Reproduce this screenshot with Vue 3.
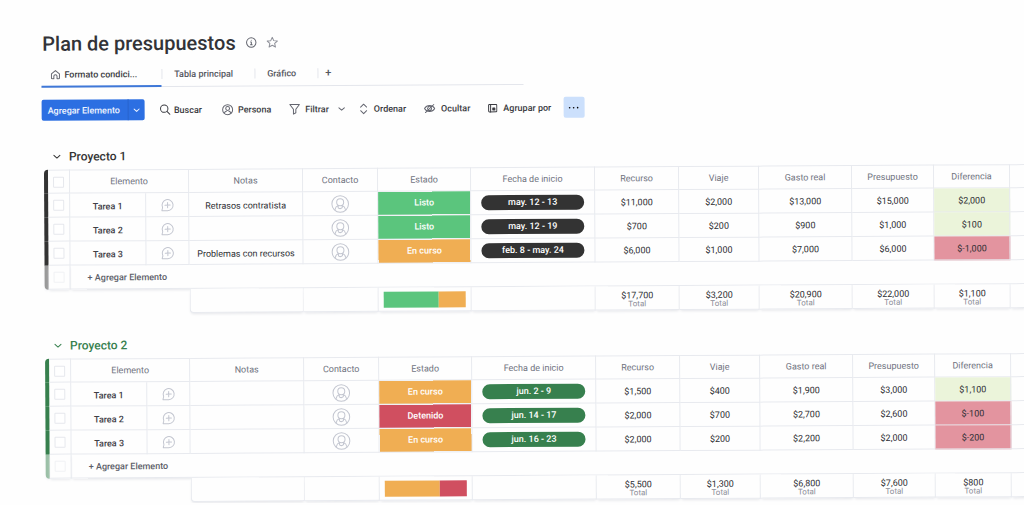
<script setup>
import { ref } from 'vue'

const columns = ['Notas', 'Contacto', 'Estado', 'Fecha de inicio', 'Recurso', 'Viaje', 'Gasto real', 'Presupuesto', 'Diferencia']

const projects = ref([
  {
    id: 'p1',
    name: 'Proyecto 1',
    theme: 'dark',
    tasks: [
      { name: 'Tarea 1', note: 'Retrasos contratista', status: 'Listo', tone: 'done', dates: 'may. 12 - 13', values: ['$11,000', '$2,000', '$13,000', '$15,000'], diff: '$2,000' },
      { name: 'Tarea 2', note: '', status: 'Listo', tone: 'done', dates: 'may. 12 - 19', values: ['$700', '$200', '$900', '$1,000'], diff: '$100' },
      { name: 'Tarea 3', note: 'Problemas con recursos', status: 'En curso', tone: 'working', dates: 'feb. 8 - may. 24', values: ['$6,000', '$1,000', '$7,000', '$6,000'], diff: '$-1,000' }
    ],
    summary: [{ tone: 'done', share: 2 }, { tone: 'working', share: 1 }],
    totals: ['$17,700', '$3,200', '$20,900', '$22,000', '$1,100']
  },
  {
    id: 'p2',
    name: 'Proyecto 2',
    theme: 'green',
    tasks: [
      { name: 'Tarea 1', note: '', status: 'En curso', tone: 'working', dates: 'jun. 2 - 9', values: ['$1,500', '$400', '$1,900', '$3,000'], diff: '$1,100' },
      { name: 'Tarea 2', note: '', status: 'Detenido', tone: 'stuck', dates: 'jun. 14 - 17', values: ['$2,000', '$700', '$2,700', '$2,600'], diff: '$-100' },
      { name: 'Tarea 3', note: '', status: 'En curso', tone: 'working', dates: 'jun. 16 - 23', values: ['$2,000', '$200', '$2,200', '$2,000'], diff: '$-200' }
    ],
    summary: [{ tone: 'working', share: 2 }, { tone: 'stuck', share: 1 }],
    totals: ['$5,500', '$1,300', '$6,800', '$7,600', '$800']
  }
])
</script>

<template>
  <div class="page">
    <main class="board">
      <header class="title-row">
        <h1>Plan de presupuestos</h1>
        <button aria-label="Información">
          <svg width="12" height="12" viewBox="0 0 12 12" class="ink muted">
            <circle cx="6" cy="6" r="4.7" />
            <path d="M5.3 5.5H6.1V8.2M5.2 8.3h1.8M6 3.6v.1" />
          </svg>
        </button>
        <button class="star" aria-label="Favorito">
          <svg width="12" height="12" viewBox="0 0 12 12" class="ink soft">
            <path d="M6 .9 7.5 4.2l3.6.4-2.7 2.4.8 3.6L6 8.8l-3.2 1.8.8-3.6L.9 4.6l3.6-.4Z" />
          </svg>
        </button>
      </header>

      <nav class="tabs">
        <button class="tab active">
          <svg width="10" height="10" viewBox="0 0 10 10" class="ink muted">
            <path d="M1 4.2 5 .9l4 3.3v4.1q0 .8-.8.8H6.6V6.6a1.6 1.6 0 0 0-3.2 0v2.5H1.8Q1 9.1 1 8.3Z" />
          </svg>
          Formato condici...
        </button>
        <button class="tab">Tabla principal</button>
        <button class="tab">Gráfico</button>
        <button class="tab add" aria-label="Agregar vista">+</button>
      </nav>

      <div class="toolbar">
        <div class="split">
          <button class="split-main">Agregar Elemento</button>
          <button class="split-more" aria-label="Más opciones">
            <svg width="8" height="8" viewBox="0 0 8 8" class="ink"><path d="m1.5 2.8 2.5 2.4 2.5-2.4" /></svg>
          </button>
        </div>
        <button class="tool search">
          <svg width="11" height="11" viewBox="0 0 11 11" class="ink"><circle cx="4.6" cy="4.6" r="3.7" /><path d="m7.3 7.3 3 3" /></svg>
          Buscar
        </button>
        <button class="tool person">
          <svg width="12" height="12" viewBox="0 0 12 12" class="ink muted">
            <circle cx="6" cy="6" r="5" /><circle cx="6" cy="4.8" r="1.9" />
            <path d="M2.7 9.500c.3-1 1-1.700 2-2M9.300 9.500c-.3-1-1-1.700-2-2" />
          </svg>
          Persona
        </button>
        <button class="tool filter">
          <svg width="12" height="12" viewBox="0 0 12 12" class="ink muted"><path d="M1.200 1.200h9.600L7.200 6v3.400L4.800 10.800V6Z" /></svg>
          Filtrar
          <svg width="8" height="8" viewBox="0 0 8 8" class="ink muted caret"><path d="m1.300 2.800 2.700 2.400 2.700-2.400" /></svg>
        </button>
        <button class="tool sort">
          <svg width="8" height="12" viewBox="0 0 8 12" class="ink muted"><path d="M1 4.200 4 1.300l3 2.900M1 7.800l3 2.900 3-2.900" /></svg>
          Ordenar
        </button>
        <button class="tool hide">
          <svg width="12" height="10" viewBox="0 0 12 10" class="ink muted">
            <path d="M.9 5c2.400-4 7.800-4 10.200 0-2.400 4-7.800 4-10.200 0ZM1.800 9 10.200 1M4.500 6.400a2 2 0 0 1 2.600-3M7.800 4.300a2 2 0 0 1-2.600 2.500" />
          </svg>
          Ocultar
        </button>
        <button class="tool group-by">
          <svg width="10" height="10" viewBox="0 0 10 10" class="ink">
            <rect x="1" y="1.300" width="8.200" height="7.400" rx=".8" /><path d="M3 1.300v7.400" /><path class="solid" d="M5.200 4.800h2v2h-2Z" />
          </svg>
          Agrupar por
        </button>
        <button class="dots" aria-label="Más">
          <svg width="12" height="4" viewBox="0 0 12 4"><circle cx="2" cy="2" r=".8" /><circle cx="6" cy="2" r=".8" /><circle cx="10" cy="2" r=".8" /></svg>
        </button>
      </div>

      <section v-for="project in projects" :key="project.id" class="project" :class="project.theme">
        <h2>
          <svg width="10" height="10" viewBox="0 0 10 10" class="ink"><path d="m2 3.700 3 2.700 3-2.700" /></svg>
          {{ project.name }}
        </h2>
        <table>
          <colgroup>
            <col class="w-bar"><col class="w-check"><col class="w-name"><col class="w-chat">
            <col class="w-notes"><col class="w-contact"><col class="w-status"><col class="w-date">
            <col class="w-resource"><col class="w-travel"><col class="w-cost"><col class="w-budget"><col class="w-diff"><col>
          </colgroup>
          <thead>
            <tr>
              <td class="bar bar-top"></td>
              <td><input type="checkbox" aria-label="Seleccionar todo"></td>
              <th colspan="2">Elemento</th>
              <th v-for="column in columns" :key="column">{{ column }}</th>
              <td></td>
            </tr>
          </thead>
          <tbody>
            <tr v-for="task in project.tasks" :key="task.name">
              <td class="bar"></td>
              <td><input type="checkbox" :aria-label="task.name"></td>
              <td class="name">{{ task.name }}</td>
              <td>
                <button class="cell-button" aria-label="Comentar">
                  <svg width="14" height="14" viewBox="0 0 14 14" class="ink faint">
                    <path d="M1.700 12.600h5.700a5.500 5.500 0 1 0-5.100-3.400q.3.900-.3 1.800ZM7.400 4.500v5.200M4.800 7.100H10" />
                  </svg>
                </button>
              </td>
              <td class="note">{{ task.note }}</td>
              <td>
                <svg width="20" height="20" viewBox="0 0 20 20" class="ink faint avatar">
                  <circle cx="10" cy="10" r="8.300" /><circle cx="10" cy="8.300" r="3.500" />
                  <path d="M4.800 15.500c.3-2 1.300-3.300 3.200-4v2.200q2 1.800 4 0v-2.200c1.900.7 2.900 2 3.200 4" />
                </svg>
              </td>
              <td class="status" :class="task.tone">{{ task.status }}</td>
              <td><span class="pill">{{ task.dates }}</span></td>
              <td v-for="(value, i) in task.values" :key="i" class="value">{{ value }}</td>
              <td class="value" :class="task.diff.includes('-') ? 'negative' : 'positive'">{{ task.diff }}</td>
              <td></td>
            </tr>
            <tr class="add-row">
              <td class="bar bar-bottom"></td>
              <td><input type="checkbox" disabled aria-label="Nuevo elemento"></td>
              <td colspan="12" class="add-cell"><button class="add-item">+ Agregar Elemento</button></td>
            </tr>
          </tbody>
          <tfoot>
            <tr>
              <td colspan="4" class="blank"></td>
              <td class="first"></td>
              <td></td>
              <td>
                <div class="battery">
                  <span v-for="part in project.summary" :key="part.tone" :class="part.tone" :style="{ flexGrow: part.share }"></span>
                </div>
              </td>
              <td></td>
              <td v-for="(total, i) in project.totals" :key="i" class="total">{{ total }}<small>Total</small></td>
              <td></td>
            </tr>
          </tfoot>
        </table>
      </section>
    </main>
  </div>
</template>

<style>
body {
  background: #fefefe;
}
</style>

<style scoped>
.page {
  overflow: hidden;
  background: #fefefe;
}
.board {
  box-sizing: border-box;
  padding: 32px 0 0 41px;
  color: #3a3b41;
  font-family: Roboto, "Liberation Sans", sans-serif;
  font-size: 9px;
  transform: rotate(-0.33deg);
  transform-origin: 0 0;
}
button {
  padding: 0;
  border: 0;
  background: none;
  color: inherit;
  font: inherit;
  white-space: nowrap;
}
svg {
  display: block;
  flex: none;
}
.ink {
  fill: none;
  stroke: currentColor;
  stroke-linecap: round;
  stroke-linejoin: round;
  stroke-width: 1;
}
.muted {
  color: #63656f;
}
.soft {
  color: #8d8f98;
}
.faint {
  color: #c3c6d0;
}
.solid {
  fill: currentColor;
}
.title-row {
  display: flex;
  align-items: center;
  height: 24px;
}
h1 {
  margin: 0 10px 0 1px;
  color: #323338;
  font-size: 20px;
  font-weight: 500;
  line-height: 24px;
}
.star {
  margin-left: 9px;
}
.tabs {
  display: flex;
  width: fit-content;
  height: 25px;
  margin-top: 6px;
  padding-right: 192px;
  border-bottom: 1px solid #e4e6ec;
}
.tab {
  position: relative;
  display: flex;
  align-items: center;
  padding: 1px 21px 0 13px;
  font-weight: 500;
  color: #55575f;
}
.tab + .tab::before {
  content: "";
  position: absolute;
  left: 0;
  width: 1px;
  height: 10px;
  background: #e4e6ec;
}
.tab.active {
  gap: 4px;
  padding: 1px 24px 0 9px;
  margin-bottom: -1px;
  border-bottom: 2px solid #3f78d8;
  color: #3a3b41;
}
.tab.add {
  padding: 0 0 0 8px;
  font-size: 11px;
}
.toolbar {
  display: flex;
  align-items: center;
  height: 21px;
  margin-top: 12px;
  font-weight: 500;
}
.split {
  display: flex;
  height: 21px;
  border-radius: 2px;
  background: #2c6fe2;
  color: #eef4ff;
}
.split-main {
  padding: 0 8px 0 6px;
}
.split-more {
  padding: 0 4px;
  border-left: 1px solid #2864cd;
}
.tool {
  display: flex;
  align-items: center;
  gap: 4px;
}
.search {
  gap: 3px;
  margin-left: 15px;
}
.person {
  margin-left: 20px;
}
.filter {
  gap: 5px;
  margin-left: 17px;
}
.caret {
  margin-left: 4px;
}
.sort {
  gap: 6px;
  margin-left: 14px;
}
.hide {
  gap: 5px;
  margin-left: 18px;
}
.group-by {
  gap: 6px;
  margin-left: 17px;
}
.dots {
  display: grid;
  place-items: center;
  width: 21px;
  height: 21px;
  margin-left: 12px;
  border-radius: 2px;
  background: #cce0fc;
}
.project {
  margin-top: 20px;
}
.toolbar + .project {
  margin-top: 24px;
}
.dark {
  --accent: #333333;
  --accent-soft: #999999;
}
.green {
  --accent: #37804e;
  --accent-soft: #9bc0a7;
}
h2 {
  display: flex;
  align-items: center;
  gap: 7px;
  height: 24px;
  margin: 0 0 1px;
  padding: 0 0 0 10px;
  color: var(--accent);
  font-size: 12px;
  font-weight: 500;
}
table {
  width: calc(100% - 2px);
  margin-left: 2px;
  border-spacing: 0;
  table-layout: fixed;
}
.w-bar { width: 4px; }
.w-check { width: 22px; }
.w-name { width: 76px; }
.w-chat { width: 43px; }
.w-notes { width: 114px; }
.w-contact { width: 75px; }
.w-status { width: 93px; }
.w-date { width: 124px; }
.w-resource { width: 84px; }
.w-travel { width: 80px; }
.w-cost { width: 93px; }
.w-budget { width: 82px; }
.w-diff { width: 76px; }
th,
td {
  box-sizing: border-box;
  height: 24px;
  padding: 0;
  border: solid #e8eaef;
  border-width: 0 1px 1px 0;
  line-height: 11px;
  text-align: center;
  white-space: nowrap;
}
th {
  color: #70737f;
  font-weight: 400;
}
thead th,
thead td {
  border-top-width: 1px;
}
tbody td {
  font-weight: 500;
  color: #3f4046;
}
tbody .name,
tbody .note {
  padding-top: 3px;
}
tbody .note,
tbody .value {
  color: #2d2e33;
  font-weight: 400;
}
tbody .value {
  padding-top: 2px;
}
.bar {
  border: 0;
  background: var(--accent);
}
.bar-top {
  border-radius: 4px 0 0 0;
}
.bar-bottom {
  border-radius: 0 0 0 4px;
  background: var(--accent-soft);
}
input {
  display: block;
  box-sizing: border-box;
  width: 11px;
  height: 11px;
  margin: 0 auto;
  border: 1px solid #e6e8ed;
  border-radius: 1px;
  background: #fff;
  appearance: none;
}
input:disabled {
  opacity: 0.5;
}
.cell-button {
  display: block;
  margin: 0 auto;
}
.avatar {
  margin: 0 auto;
}
tbody .status {
  background-clip: padding-box;
  color: #fff;
}
.done {
  background-color: #5bc57d;
}
.working {
  background-color: #f0ae53;
}
.stuck {
  background-color: #d04f60;
}
.pill {
  display: block;
  margin: 0 10px;
  border-radius: 8px;
  background: var(--accent);
  color: #fff;
  line-height: 15px;
}
.positive {
  background: #ebf4da;
}
.negative {
  background: #e3949f;
}
.add-row td {
  box-shadow: 0 2px 3px -1px #e4e5e9;
}
.add-row .add-cell {
  padding: 2px 0 0 17px;
  color: #5d5f69;
  text-align: left;
}
.add-item {
  font-weight: 500;
}
tfoot td {
  background: #fefefe;
  box-shadow: 0 2px 3px -1px #e4e5e9;
}
tfoot .blank {
  border: 0;
  background: none;
  box-shadow: none;
}
tfoot .first {
  border-left-width: 1px;
  border-bottom-left-radius: 4px;
}
.battery {
  display: flex;
  height: 16px;
  margin: 0 5px;
}
tfoot .total {
  padding-top: 4px;
  color: #2d2e33;
  line-height: 9px;
}
small {
  display: block;
  color: #8b8d97;
  font-size: 8px;
  line-height: 8px;
}
</style>
